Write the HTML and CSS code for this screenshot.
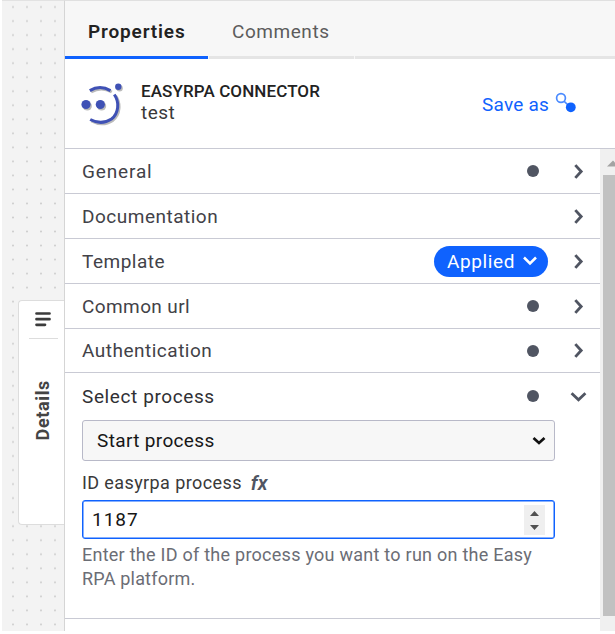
FILE: index.html
```html
<!DOCTYPE html>
<html lang="en">
<head>
<meta charset="utf-8">
<title>Properties</title>
<link rel="stylesheet" href="styles.css">
</head>
<body>
<div class="app">
  <aside class="canvas">
    <div class="details">
      <svg class="details-icon" width="16" height="15" viewBox="0 0 16 15"><path d="M1.500 1.500H14.500M1.500 7.200H14.500M1.500 12.800H10" fill="none" stroke="#3b3b3b" stroke-width="2.700" stroke-linecap="round"/></svg>
      <div class="details-rule"></div>
      <span class="details-label">Details</span>
    </div>
  </aside>
  <main class="panel">
    <nav class="tabs">
      <div class="tab active"><span class="t-properties">Properties</span></div>
      <div class="tab"><span class="t-comments">Comments</span></div>
      <div class="tab-rest"></div>
    </nav>
    <header class="header">
      <svg class="logo" width="44" height="46" viewBox="0 0 44 46">
        <g class="logo-shadow" transform="translate(1.300 1.400)"><use href="#mark"/></g>
        <g id="mark" fill="none" stroke="currentColor" stroke-width="3"><path d="M8.800 8.600Q19 2.600 29.500 8.600M33.300 12.500C38.500 20 38 31 30.500 37Q20.500 43.500 9.200 37.500"/><g fill="currentColor" stroke="none"><circle cx="5" cy="22.500" r="4.600"/><circle cx="19.300" cy="22.500" r="4.600"/><circle cx="37.300" cy="4.800" r="3.200"/></g></g>
      </svg>
      <div class="names"><div class="type"><span>EASYRPA CONNECTOR</span></div><div class="name">test</div></div>
      <div class="save"><span class="t-save">Save as</span>
        <svg width="22" height="22" viewBox="0 0 22 22"><circle cx="6" cy="6" r="4.400" fill="none" stroke="#4b8bff" stroke-width="1.700"/><path d="M9 9.200L13 13" stroke="#4b8bff" stroke-width="1.700"/><circle cx="15.800" cy="15.300" r="4.900" fill="#0f62fe"/></svg>
      </div>
    </header>
    <div class="body">
      <div class="groups">
        <div class="row"><span class="t-general">General</span><i class="dot"></i><svg class="chev" viewBox="0 0 16 16"><path d="M5 2l5.500 6L5 14"/></svg></div>
        <div class="row"><span class="t-doc">Documentation</span><svg class="chev" viewBox="0 0 16 16"><path d="M5 2l5.500 6L5 14"/></svg></div>
        <div class="row"><span class="t-template">Template</span><div class="applied"><span class="t-applied">Applied</span><svg width="16" height="12" viewBox="0 0 16 12"><path d="M2 2.500l6 6 6-6" fill="none" stroke="#fff" stroke-width="2.500"/></svg></div><svg class="chev" viewBox="0 0 16 16"><path d="M5 2l5.500 6L5 14"/></svg></div>
        <div class="row"><span class="t-url">Common url</span><i class="dot"></i><svg class="chev" viewBox="0 0 16 16"><path d="M5 2l5.500 6L5 14"/></svg></div>
        <div class="row short"><span class="t-auth">Authentication</span><i class="dot"></i><svg class="chev" viewBox="0 0 16 16"><path d="M5 2l5.500 6L5 14"/></svg></div>
        <section class="open">
          <div class="row open-row"><span class="t-select">Select process</span><i class="dot"></i><svg class="chev" viewBox="0 0 16 16"><path d="M1.500 5l6.500 6 6.500-6"/></svg></div>
          <div class="select"><span class="t-start">Start process</span><svg width="14" height="10" viewBox="0 0 14 10"><path d="M1.500 2l5.500 5 5.500-5" fill="none" stroke="#111" stroke-width="2.700"/></svg></div>
          <div class="label"><span class="t-id">ID easyrpa process</span><span class="fx">fx</span></div>
          <div class="input"><span class="t-num">1187</span><svg width="21" height="30" viewBox="0 0 21 30"><path d="M0 0h21v30H0z" fill="#efefef"/><path d="M6 11l4.500-5 4.500 5zM6 20l4.500 5 4.500-5z" fill="#505050"/></svg></div>
          <p class="help"><span class="t-help1">Enter the ID of the process you want to run on the Easy</span><br><span class="t-help2">RPA platform.</span></p>
        </section>
      </div>
      <div class="scroll"><svg width="15" height="26" viewBox="0 0 15 26"><path d="M7 17.500l6-6 6 6z" fill="#a3a3a3"/></svg><div class="thumb"></div></div>
    </div>
  </main>
</div>
</body>
</html>
```
FILE: styles.css
```css
* { box-sizing: border-box; }
body { margin: 0; background: #fff; font-family: "Roboto", sans-serif; font-size: 19px; color: #393939; }
.app { display: flex; width: 615px; height: 634px; padding-left: 2px; overflow: hidden; }
.app span { white-space: nowrap; }
.canvas { width: 63px; height: 631px; padding: 299px 0 0 16px; border-top: 1px solid #e2e2e2; border-right: 1px solid #d5d5d5; background: radial-gradient(circle, #cfcfcf .8px, transparent 1.200px) 4px -1px / 14px 14.040px, #f3f3f3; }
.details { width: 46px; height: 225px; background: #fff; border: 1px solid #ddd; border-right: 0; border-radius: 4px 0 0 4px; display: flex; flex-direction: column; align-items: center; padding: 11px 0 0 3px; }
.details-rule { width: 29px; height: 1px; background: #ddd; margin: 11px 0 41px; }
.details-label { writing-mode: vertical-rl; transform: rotate(180deg); font-size: 18px; line-height: 24px; font-weight: 700; color: #444; letter-spacing: .65px; }
.panel { flex: 1; min-width: 0; }
.tabs { height: 59px; display: flex; gap: 1px; border-top: 1px solid #e0e0e0; background: #f7f7f7; }
.tab { width: 145px; padding-left: 23px; border-bottom: 3px solid #e5e5e5; line-height: 61px; color: #5c5c5c; }
.tab.active { width: 143px; border-bottom-color: #0f62fe; color: #222; font-weight: 600; }
.tab-rest { flex: 1; border-bottom: 3px solid #e5e5e5; }
.t-properties { letter-spacing: .85px; }
.t-comments { letter-spacing: .55px; }
.header { height: 90px; border-bottom: 1px solid #c9cad4; display: flex; padding: 21px 38px 0 16px; }
.logo { color: #3f51b5; margin-top: 2px; }
.logo-shadow { color: #bbb; }
.names { margin-left: 16px; flex: 1; line-height: 22px; }
.type { font-size: 17px; font-weight: 500; color: #222; letter-spacing: .1px; }
.name { letter-spacing: .5px; }
.save { display: flex; color: #0f62fe; height: 48px; align-items: center; gap: 6px; }
.save svg { margin-top: -2px; }
.t-save { letter-spacing: .2px; }
.body { display: flex; height: 482px; }
.groups { width: 535px; }
.row { height: 45px; border-bottom: 1px solid #c9cad4; display: flex; align-items: center; padding: 0 13px 0 17px; color: #424248; }
.row > span { flex: 1; }
.row.short { height: 44px; }
.t-general { letter-spacing: .85px; }
.t-doc, .t-template, .t-auth { letter-spacing: .5px; }
.t-url { letter-spacing: .4px; }
.t-select { letter-spacing: .6px; }
.t-start { letter-spacing: .35px; }
.t-id { letter-spacing: .4px; }
.t-num { letter-spacing: 1px; }
.t-help1 { letter-spacing: .255px; }
.t-help2 { letter-spacing: .2px; }
.t-applied { letter-spacing: .6px; }
.dot { width: 12px; height: 12px; border-radius: 50%; background: #505562; margin-right: 31px; }
.chev { width: 17px; height: 17px; fill: none; stroke: #505562; stroke-width: 2.700; }
.applied { display: flex; align-items: center; justify-content: space-between; width: 114px; height: 31px; border-radius: 16px; background: #0f62fe; color: #fff; padding: 0 10px 0 13px; margin-right: 22px; }
.open { height: 246px; border-bottom: 1px solid #c9cad4; }
.open-row { border: 0; height: 46px; color: #303034; }
.select { width: 473px; height: 41px; margin: 1px 0 0 17px; background: #f7f7f7; border: 1px solid #b8b9c8; border-radius: 3px; display: flex; align-items: center; justify-content: space-between; padding: 0 8px 0 14px; color: #161616; }
.label { height: 39px; padding: 4px 0 0 17px; display: flex; align-items: center; font-size: 18px; }
.fx { font-weight: 600; font-style: italic; font-size: 20px; margin-left: 9px; color: #505562; }
.input { width: 473px; height: 39px; margin-left: 17px; border: 1px solid #0f62fe; box-shadow: inset 0 0 0 .5px #0f62fe; border-radius: 3px; display: flex; align-items: center; justify-content: space-between; padding: 0 9px; color: #161616; }
.help { margin: 4px 0 0 17px; font-size: 18px; line-height: 24px; color: #6b6d75; }
.scroll { flex: 1; background: #f0f0f0; display: flex; flex-direction: column; }
.scroll svg { flex: none; }
.thumb { margin-left: 3px; height: 441px; background: #c1c1c1; }
```
